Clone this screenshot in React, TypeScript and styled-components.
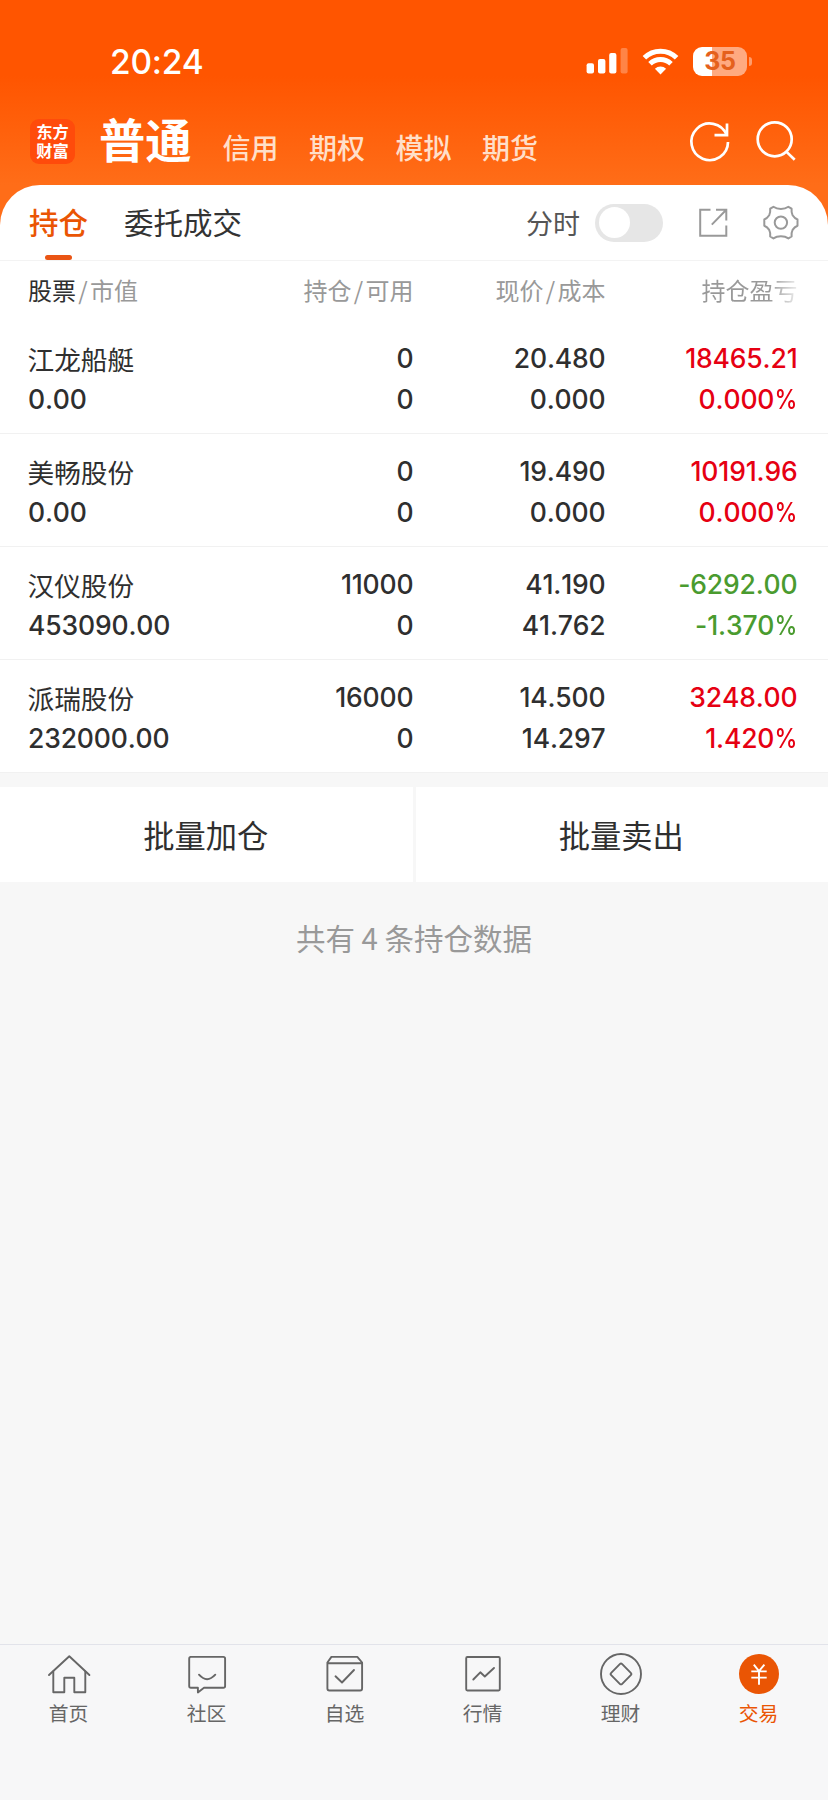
import React from "react";
import styled, { createGlobalStyle, css } from "styled-components";

const CJK = `"Noto Sans CJK SC", sans-serif`;
const NUM = `Inter, sans-serif`;

const GlobalStyle = createGlobalStyle`
  * { box-sizing: border-box; }
  body { margin: 0; background: #f7f7f7; font-family: ${CJK}; color: #2f2f2f; }
`;

const Page = styled.div`
  width: 828px;
  height: 1800px;
  display: flex;
  flex-direction: column;
  overflow: hidden;
  background: #f7f7f7;
`;

const Hero = styled.header`
  height: 225px;
  margin-bottom: -40px;
  flex: none;
  background: linear-gradient(#ff5500 0, #ff5500 76px, #ff6d18 185px, #ff6d18 100%);
`;

const StatusBar = styled.div`
  height: 104px;
  padding: 20px 76px 0 110px;
  display: flex;
  align-items: center;
  justify-content: space-between;
`;

const Clock = styled.div`
  margin-top: -1px;
  font: 500 33.5px/40px ${NUM};
  letter-spacing: -0.2px;
  color: #fff;
`;

const StatusIcons = styled.div`
  display: flex;
  align-items: center;
  margin-top: -2px;
`;

const Battery = styled.div`
  position: relative;
  width: 54px;
  height: 29px;
  margin: 0 5px 0 14px;
  border-radius: 9px;
  background: linear-gradient(90deg, #fff 19px, #ffaa80 19px);
  font: 700 25px/29px ${NUM};
  letter-spacing: -0.4px;
  text-align: center;
  color: #e5611c;
  &::after {
    content: "";
    position: absolute;
    right: -5px;
    top: 10px;
    width: 3.5px;
    height: 9px;
    border-radius: 0 4px 4px 0;
    background: #ff9c6b;
  }
`;

const Accounts = styled.nav`
  height: 81px;
  padding: 0 32px 0 30px;
  display: flex;
  align-items: flex-start;
`;

const Logo = styled.div`
  width: 45px;
  height: 45px;
  margin-top: 15px;
  padding-top: 3px;
  border-radius: 9px;
  background: #ff4b0b;
  color: #fff;
  text-align: center;
  font: 700 16.3px/19.3px ${CJK};
`;

const AccountTitle = styled.h1`
  margin: 6px 0 0 24px;
  width: 93px;
  font: 700 46.3px/56px ${CJK};
  color: #fff;
  white-space: nowrap;
`;

const AccountTab = styled.span`
  margin: 22px 0 0 30.5px;
  font: 500 28px/42px ${CJK};
  color: #ffdfc9;
`;

const HeroActions = styled.div`
  margin: 15px 0 0 auto;
  display: flex;
  gap: 24px;
`;

const Card = styled.main`
  position: relative;
  flex: none;
  border-radius: 40px 40px 0 0;
  background: #fff;
`;

const TabBar = styled.div`
  height: 76px;
  padding: 0 29px;
  display: flex;
  align-items: center;
  border-bottom: 1px solid #f3f3f3;
`;

const Tab = styled.div<{ $active?: boolean }>`
  position: relative;
  margin: -3px 36px 0 0;
  font: 400 29.5px/44px ${CJK};
  color: #333;
  ${(p) =>
    p.$active &&
    css`
      font-weight: 500;
      color: #ea5504;
      &::after {
        content: "";
        position: absolute;
        left: 16px;
        bottom: -17px;
        width: 27px;
        height: 5px;
        border-radius: 3px;
        background: #ea5514;
      }
    `}
`;

const TabTools = styled.div`
  margin-left: auto;
  display: flex;
  align-items: center;
  font: 400 27px/44px ${CJK};
  color: #555;
`;

const Toggle = styled.div`
  width: 68px;
  height: 38px;
  margin: 0 35px 0 15px;
  padding: 3.5px;
  border-radius: 19px;
  background: #e6e6e6;
  &::before {
    content: "";
    display: block;
    width: 31px;
    height: 31px;
    border-radius: 50%;
    background: #fff;
  }
`;

const grid = css`
  display: grid;
  grid-template-columns: 190.5px 195px 192px 192px;
  padding: 0 0 0 28px;
`;

const TableHead = styled.div`
  ${grid}
  height: 60px;
  padding-top: 12px;
  font: 400 24px/34px ${CJK};
  color: #999;
  white-space: nowrap;
`;

const HeadCell = styled.div<{ $end?: boolean }>`
  text-align: ${(p) => (p.$end ? "right" : "left")};
`;

const Primary = styled.span`
  color: #2f2f2f;
`;

const Slash = styled.span`
  display: inline-block;
  width: 14px;
  text-align: center;
`;

const FadeLabel = styled.span`
  display: inline-block;
  background: linear-gradient(90deg, #999 70%, #eee 100%);
  background-clip: text;
  color: transparent;
`;

const Row = styled.div`
  ${grid}
  height: 113px;
  padding-top: 17px;
  border-bottom: 1px solid #f1f1f1;
`;

const Cell = styled.div<{ $tone?: "up" | "down" }>`
  display: flex;
  flex-direction: column;
  align-items: flex-end;
  color: ${(p) => (p.$tone === "up" ? "#e60012" : p.$tone === "down" ? "#4a9b2f" : "#2f2f2f")};
`;

const NameCell = styled(Cell)`
  align-items: flex-start;
`;

const Figure = styled.div`
  font: 550 26.5px/41px ${NUM};
  font-kerning: none;
  letter-spacing: -0.15px;
`;

const Percent = styled.span`
  display: inline-block;
  margin-left: -3px;
  transform: scaleX(0.87);
  transform-origin: right;
`;

const StockName = styled.div`
  margin-left: -0.5px;
  font: 400 26.7px/41px ${CJK};
`;

const Actions = styled.div`
  margin-top: 14px;
  display: flex;
  gap: 3px;
`;

const Action = styled.button`
  flex: 1;
  height: 95px;
  padding: 0 1px 0 0;
  border: 0;
  background: #fff;
  font: 400 31.3px/46px ${CJK};
  color: #2f2f2f;
`;

const Summary = styled.p`
  margin: 33px 0 0;
  text-align: center;
  font: 400 29.5px/44px ${CJK};
  color: #999;
`;

const BottomNav = styled.nav`
  margin-top: auto;
  height: 156px;
  flex: none;
  display: flex;
  border-top: 1px solid #e2e3ea;
  background: #f7f7f8;
`;

const NavItem = styled.div<{ $active?: boolean }>`
  flex: 1;
  padding: 7px 1px 0 0;
  display: flex;
  flex-direction: column;
  align-items: center;
  font: 400 19.8px/30px ${CJK};
  color: ${(p) => (p.$active ? "#ea5504" : "#666")};
`;

const SignalIcon = () => (
  <svg width="42" height="28" viewBox="0 0 42 28" fill="#fff">
    <rect x="0.6" y="16.3" width="7.4" height="10.2" rx="2" />
    <rect x="12" y="12" width="7.4" height="14.5" rx="2" />
    <rect x="23.2" y="6" width="7.2" height="20.5" rx="2" />
    <rect x="34.6" y="1" width="7" height="25.5" rx="2" fillOpacity="0.28" />
  </svg>
);

const WifiIcon = () => (
  <svg width="37" height="28" viewBox="0 0 37 28" style={{ marginLeft: 14 }}>
    <g fill="none" stroke="#fff" strokeWidth="5">
      <path d="M2.4 10.8a22.8 22.8 0 0 1 32.2 0" />
      <path d="M8 16.8a15 15 0 0 1 21 0" />
    </g>
    <path fill="#fff" d="M18.5 27.4l-5.6-5.7a8 8 0 0 1 11.2 0z" />
  </svg>
);

const RefreshIcon = () => (
  <svg width="42" height="46" viewBox="0 0 42 46" fill="none" stroke="#fff" strokeWidth="2.7">
    <path d="M40 23A18.3 18.3 0 1 1 38.6 15.8" />
    <path d="M39 4.5v11.6H26.5" />
  </svg>
);

const SearchIcon = () => (
  <svg width="42" height="46" viewBox="0 0 42 46" fill="none" stroke="#fff" strokeWidth="2.7">
    <circle cx="20.7" cy="20.3" r="17" />
    <path d="M32.3 32.6l8.4 8.2" />
  </svg>
);

const ExportIcon = () => (
  <svg width="30" height="30" viewBox="0 0 30 30" fill="none" stroke="#999" strokeWidth="2">
    <path d="M12.5 1.7H2.2V27.8H28.3V17.5M18 1.7H28.3V12.5M28.3 1.7L13.8 16.6" />
  </svg>
);

const GearIcon = () => (
  <svg width="36" height="36" viewBox="0 0 36 36" fill="none" stroke="#999" strokeWidth="2" strokeLinejoin="round" style={{ marginLeft: 35 }}>
    <path d="M10.4 1.8Q13.5 4 17.9 4Q22.3 4 25.4 1.8L28.6 3.7Q28.2 7.5 29.6 10.3Q31.5 13.3 34.5 14.5V20.7Q31.5 21.9 29.6 24.9Q28.2 27.7 28.6 31.5L25.4 33.4Q22.3 31.2 17.9 31.2Q13.5 31.2 10.4 33.4L7.2 31.5Q7.6 27.7 6.2 24.9Q4.3 21.9 1.3 20.7V14.5Q4.3 13.3 6.2 10.3Q7.6 7.5 7.2 3.7Z" />
    <circle cx="17.9" cy="17.6" r="6.2" />
  </svg>
);

const NavIcon = ({ children }: { children: React.ReactNode }) => (
  <svg width="46" height="46" viewBox="0 0 46 46" fill="none" stroke="#666" strokeWidth="1.9" strokeLinecap="round" strokeLinejoin="round">
    {children}
  </svg>
);

const navItems = [
  {
    label: "首页",
    icon: (
      <>
        <path d="M3 23L23.3 4.2L43.4 23" />
        <path d="M7.3 19.5V40.3H18.3V25.8H28.3V40.3H39.3V19.5" />
      </>
    ),
  },
  {
    label: "社区",
    icon: (
      <>
        <path d="M6.3 4.9H39.3Q41.1 4.9 41.1 6.7V34Q41.1 35.8 39.3 35.8H20L13.9 40.4V35.8H6.9Q5.2 35.8 5.2 34V6.7Q5.2 4.9 6.9 4.9Z" />
        <path d="M15 22.7q8 9 16.3 0" />
      </>
    ),
  },
  {
    label: "自选",
    icon: (
      <>
        <path d="M5.4 10.5L9.4 4.9H35.3L40.1 10.5V36.6Q40.1 38.5 38.2 38.5H7.4Q5.4 38.5 5.4 36.6ZM5.8 11.2H39.7" />
        <path d="M13.5 24.3L20 30.5L32 18" />
      </>
    ),
  },
  {
    label: "行情",
    icon: (
      <>
        <rect x="6.2" y="5" width="33.6" height="33.5" rx="1.2" />
        <path d="M13.3 27.5L20.3 20.3L24.8 24.5L34 16" />
      </>
    ),
  },
  {
    label: "理财",
    icon: (
      <>
        <circle cx="23" cy="22" r="20" />
        <path d="M21.8 12.2Q23 11 24.2 12.2L32.8 20.8Q34 22 32.8 23.2L24.2 31.8Q23 33 21.8 31.8L13.2 23.2Q12 22 13.2 20.8Z" />
      </>
    ),
  },
  {
    label: "交易",
    active: true,
    icon: (
      <>
        <circle cx="23" cy="22" r="20" fill="#ea5504" stroke="none" />
        <path stroke="#fff" strokeLinecap="butt" d="M17.8 12.6L23 19.2L28.4 12.6M15.3 19.4H30.7M15.3 25.6H30.7M23 19V32.7" />
      </>
    ),
  },
];

type Holding = {
  name: string;
  value: string;
  held: string;
  usable: string;
  price: string;
  cost: string;
  profit: string;
  rate: string;
  tone: "up" | "down";
};

const holdings: Holding[] = [
  { name: "江龙船艇", value: "0.00", held: "0", usable: "0", price: "20.480", cost: "0.000", profit: "18465.21", rate: "0.000", tone: "up" },
  { name: "美畅股份", value: "0.00", held: "0", usable: "0", price: "19.490", cost: "0.000", profit: "10191.96", rate: "0.000", tone: "up" },
  { name: "汉仪股份", value: "453090.00", held: "11000", usable: "0", price: "41.190", cost: "41.762", profit: "-6292.00", rate: "-1.370", tone: "down" },
  { name: "派瑞股份", value: "232000.00", held: "16000", usable: "0", price: "14.500", cost: "14.297", profit: "3248.00", rate: "1.420", tone: "up" },
];

export default function App() {
  return (
    <Page>
      <GlobalStyle />
      <Hero>
        <StatusBar>
          <Clock>20:24</Clock>
          <StatusIcons>
            <SignalIcon />
            <WifiIcon />
            <Battery>35</Battery>
          </StatusIcons>
        </StatusBar>
        <Accounts>
          <Logo>
            东方
            <br />
            财富
          </Logo>
          <AccountTitle>普通</AccountTitle>
          {["信用", "期权", "模拟", "期货"].map((t) => (
            <AccountTab key={t}>{t}</AccountTab>
          ))}
          <HeroActions>
            <RefreshIcon />
            <SearchIcon />
          </HeroActions>
        </Accounts>
      </Hero>

      <Card>
        <TabBar>
          <Tab $active>持仓</Tab>
          <Tab>委托成交</Tab>
          <TabTools>
            分时
            <Toggle />
            <ExportIcon />
            <GearIcon />
          </TabTools>
        </TabBar>
        <TableHead>
          <HeadCell>
            <Primary>股票</Primary>
            <Slash>/</Slash>市值
          </HeadCell>
          <HeadCell $end>
            持仓<Slash>/</Slash>可用
          </HeadCell>
          <HeadCell $end>
            现价<Slash>/</Slash>成本
          </HeadCell>
          <HeadCell $end>
            <FadeLabel>持仓盈亏</FadeLabel>
          </HeadCell>
        </TableHead>
        {holdings.map((h) => (
          <Row key={h.name}>
            <NameCell>
              <StockName>{h.name}</StockName>
              <Figure>{h.value}</Figure>
            </NameCell>
            <Cell>
              <Figure>{h.held}</Figure>
              <Figure>{h.usable}</Figure>
            </Cell>
            <Cell>
              <Figure>{h.price}</Figure>
              <Figure>{h.cost}</Figure>
            </Cell>
            <Cell $tone={h.tone}>
              <Figure>{h.profit}</Figure>
              <Figure>
                {h.rate}
                <Percent>%</Percent>
              </Figure>
            </Cell>
          </Row>
        ))}
      </Card>

      <Actions>
        <Action>批量加仓</Action>
        <Action>批量卖出</Action>
      </Actions>
      <Summary>共有 4 条持仓数据</Summary>

      <BottomNav>
        {navItems.map((n) => (
          <NavItem key={n.label} $active={n.active}>
            <NavIcon>{n.icon}</NavIcon>
            {n.label}
          </NavItem>
        ))}
      </BottomNav>
    </Page>
  );
}
